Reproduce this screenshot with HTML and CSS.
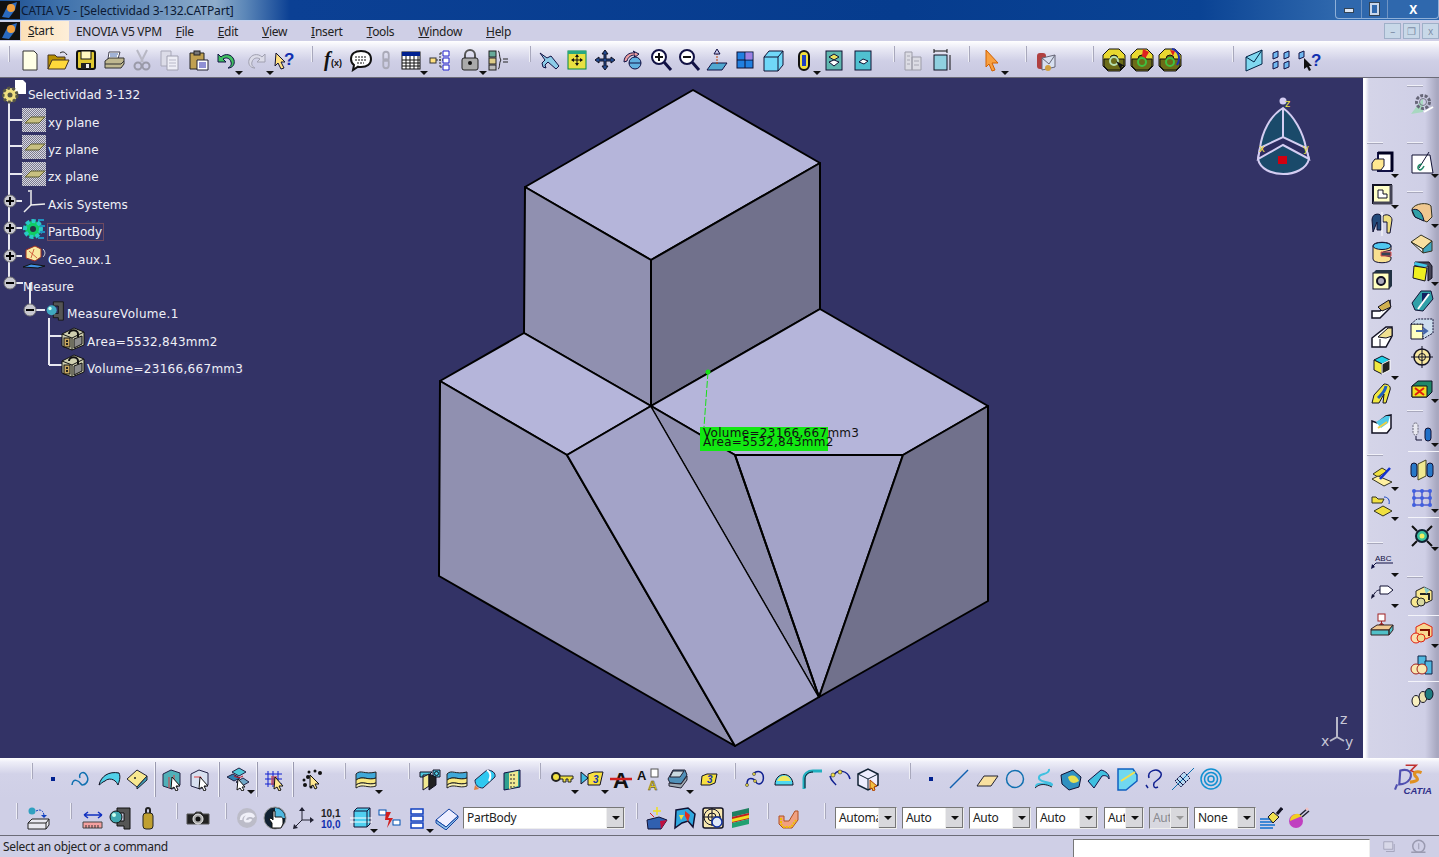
FILE: index.html
```html
<!DOCTYPE html>
<html lang="en">
<head>
  <meta charset="UTF-8">
  <title>CATIA V5 - [Selectividad 3-132.CATPart]</title>
  <link rel="stylesheet" href="styles.css">
</head>
<body>
  <svg class="defs" width="0" height="0">
    <defs>
      <pattern id="dither" width="2" height="2" patternUnits="userSpaceOnUse"><rect width="2" height="2" fill="#7a7a90"/><rect width="1" height="1" fill="#d8d8e0"/><rect x="1" y="1" width="1" height="1" fill="#d8d8e0"/></pattern>
      <symbol id="plane" viewBox="0 0 24 24"><rect width="24" height="24" fill="url(#dither)"/><path d="M3 15l6-6h14l-6 6z" fill="#c8c080" stroke="#5a5a30"/></symbol>
      <symbol id="box" viewBox="0 0 24 24"><path d="M1 7l12-6 10 4v13l-12 5-10-4z" fill="#cfcfb0" stroke="#111"/><path d="M1 7l10 4v12M11 11l12-6" fill="none" stroke="#111"/><rect x="3" y="11" width="6" height="9" fill="#c8a860" stroke="#111"/><path d="M5 13h2v2H5zM5 16h2v2H5z" fill="#222"/><path d="M13 12l8-3v8l-8 4z" fill="#8c8c8c" stroke="#111"/><path d="M8 7c0-5 9-5 9 0v3" fill="none" stroke="#111" stroke-width="2"/></symbol>
      <symbol id="locked" viewBox="0 0 24 24"><path d="M1 7l6-6h10l6 6v11l-5 5H6l-5-5z" fill="#e8d830" stroke="#111"/><path d="M2 11l6 0a4 4 0 0 1 8 0h6v7l-4 4H6l-4-4z" fill="#6c6c18" stroke="#111"/></symbol>
    </defs>
  </svg>

  <div class="titlebar">
    <svg class="applogo" viewBox="0 0 20 18"><rect width="20" height="18" fill="#111"/><path d="M2 16L8 4l9-3-2 8-6 8z" fill="#2a6ac0"/><circle cx="11" cy="7" r="4" fill="#f0a040"/></svg>
    <span class="title-text">CATIA V5 - [Selectividad 3-132.CATPart]</span>
    <div class="win-btns">
      <div class="win-btn btn-min"><i></i></div>
      <div class="win-btn btn-max"><i></i></div>
      <div class="win-btn btn-close">X</div>
    </div>
  </div>

  <div class="menubar">
    <svg class="applogo" viewBox="0 0 20 18"><rect width="20" height="18" fill="#111"/><path d="M2 16L8 4l9-3-2 8-6 8z" fill="#2a6ac0"/><circle cx="11" cy="7" r="4" fill="#f0a040"/></svg>
    <span class="menu-start"><u>S</u>tart</span>
    <span class="menu-item menu-enovia">ENOVIA V5 VPM</span>
    <span class="menu-item"><u>F</u>ile</span>
    <span class="menu-item"><u>E</u>dit</span>
    <span class="menu-item"><u>V</u>iew</span>
    <span class="menu-item"><u>I</u>nsert</span>
    <span class="menu-item"><u>T</u>ools</span>
    <span class="menu-item"><u>W</u>indow</span>
    <span class="menu-item"><u>H</u>elp</span>
    <div class="mdi-btns">
      <div class="mdi-btn">&#8211;</div>
      <div class="mdi-btn">&#10064;</div>
      <div class="mdi-btn">x</div>
    </div>
  </div>

  <div class="toolbar toolbar-top">
    <i class="grip"></i>
    <span class="tool ml-6"><svg viewBox="0 0 24 24"><path d="M5 3h11l3 3v16H5z" fill="#ffffe6" stroke="#333"/></svg></span>
    <span class="tool"><svg viewBox="0 0 24 24"><path d="M2 7h7l2 2h8v4H7l-5 8z" fill="#b89000" stroke="#432"/><path d="M2 21l4-9h17l-4 9z" fill="#ffd83a" stroke="#432"/><path d="M14 5c3-2 5-1 7 2" fill="none" stroke="#222"/></svg></span>
    <span class="tool"><svg viewBox="0 0 24 24"><rect x="3" y="3" width="18" height="18" rx="2" fill="#e0c830" stroke="#111" stroke-width="2"/><rect x="7" y="3" width="10" height="8" fill="#fff7c0" stroke="#111"/><rect x="7" y="15" width="10" height="6" fill="#222"/><rect x="12" y="16" width="3" height="4" fill="#eee"/></svg></span>
    <span class="tool"><svg viewBox="0 0 24 24"><path d="M7 4h11l-2 7H6z" fill="#fff" stroke="#445"/><path d="M8 6h8M8 8h7" stroke="#46a"/><path d="M3 13l4-3h15v6l-3 4H3z" fill="#c0b890" stroke="#333"/><path d="M3 16h16l3-3" fill="none" stroke="#333"/></svg></span>
    <span class="tool"><svg viewBox="0 0 24 24"><path d="M7 2l6 12M17 2L11 14" stroke="#b8b8c4" stroke-width="2"/><circle cx="8" cy="18" r="3.500" fill="none" stroke="#9a9aa8" stroke-width="2"/><circle cx="16" cy="18" r="3.500" fill="none" stroke="#9a9aa8" stroke-width="2"/></svg></span>
    <span class="tool"><svg viewBox="0 0 24 24"><path d="M3 3h10v15H3z" fill="#dcdce8" stroke="#a8a8b8"/><path d="M9 8h11v14H9z" fill="#eeeef6" stroke="#a0a0b0"/><path d="M11 12h7M11 15h7M11 18h7" stroke="#b8b8c8"/></svg></span>
    <span class="tool"><svg viewBox="0 0 24 24"><path d="M4 5h14v16H4z" fill="#c0a050" stroke="#222"/><rect x="8" y="3" width="6" height="4" fill="#777" stroke="#222"/><path d="M11 12h11v10H11z" fill="#fff" stroke="#223"/><path d="M13 15h7M13 17h7M13 19h7" stroke="#22a"/></svg></span>
    <span class="tool drop"><svg viewBox="0 0 24 24"><path d="M4 6v8h8l-3-3c3-2 7-1 8 3 1 3-1 5-3 6 5 0 7-4 6-8-2-6-9-7-13-3z" fill="#40c060" stroke="#114"/></svg></span>
    <span class="tool drop ml-3"><svg viewBox="0 0 24 24"><path d="M20 6v8h-8l3-3c-3-2-7-1-8 3-1 3 1 5 3 6-5 0-7-4-6-8 2-6 9-7 13-3z" fill="#dcdce8" stroke="#a0a0b0"/></svg></span>
    <span class="tool"><svg viewBox="0 0 24 24"><path d="M3 5l9 9-4 0 3 6-3 1-3-6-3 3z" fill="#ffe080" stroke="#113"/><text x="11" y="17" class="icon-q">?</text></svg></span>
    <i class="grip ml-12"></i>
    <span class="tool ml-6"><svg viewBox="0 0 24 24"><text x="3" y="18" class="icon-fx">f</text><text x="10" y="18" class="icon-fx2">(x)</text></svg></span>
    <span class="tool"><svg viewBox="0 0 24 24"><path d="M12 3c6 0 10 3 10 8s-4 8-10 8c-1 0-2 0-3-.3L4 22l1-5c-2-1.500-3-3.500-3-6 0-5 4-8 10-8z" fill="#fff" stroke="#111" stroke-width="2"/><path d="M6 9h12M6 12h12M8 15h7" stroke="#111" stroke-dasharray="2 1"/></svg></span>
    <span class="tool thin"><svg viewBox="0 0 24 24"><rect x="9" y="3" width="6" height="10" rx="3" fill="none" stroke="#aaaab8" stroke-width="2"/><rect x="9" y="11" width="6" height="10" rx="3" fill="none" stroke="#aaaab8" stroke-width="2"/></svg></span>
    <span class="tool drop"><svg viewBox="0 0 24 24"><rect x="3" y="4" width="18" height="17" fill="#fff" stroke="#111"/><rect x="3" y="4" width="18" height="4" fill="#002090"/><path d="M3 12h18M3 15h18M3 18h18M7 8v13M11 8v13M15 8v13M19 8v13" stroke="#111"/></svg></span>
    <span class="tool ml-1"><svg viewBox="0 0 24 24"><rect x="2" y="10" width="6" height="5" fill="#ffe080" stroke="#333"/><path d="M15 3h6v5h-6zM15 10h6v5h-6zM15 17h6v5h-6z" fill="#fff" stroke="#22c"/><path d="M8 12h7M12 5v14M12 5h3M12 19h3" stroke="#333" stroke-dasharray="2 1"/></svg></span>
    <span class="tool drop ml-2"><svg viewBox="0 0 24 24"><path d="M7 11V7a5 5 0 0 1 10 0v4" fill="none" stroke="#555" stroke-width="2"/><rect x="4" y="10" width="16" height="12" rx="2" fill="#aaa" stroke="#222"/><circle cx="12" cy="15" r="2" fill="#111"/></svg></span>
    <span class="tool"><svg viewBox="0 0 24 24"><rect x="3" y="3" width="7" height="6" fill="#6a9" stroke="#222"/><rect x="3" y="10" width="7" height="6" fill="#dc8" stroke="#222"/><rect x="3" y="17" width="7" height="5" fill="#bbb" stroke="#222"/><path d="M12 3c2 0 1 7 3 9-2 2-1 9-3 9" fill="none" stroke="#222"/><path d="M17 11h5M17 14h5" stroke="#222"/></svg></span>
    <i class="grip ml-17"></i>
    <span class="tool ml-4"><svg viewBox="0 0 24 24"><path d="M3 5l7 5 4-2 8 10-3 3-8-7-3 3 1 3-3-1-1-4 3-3z" fill="#8ccce8" stroke="#114"/></svg></span>
    <span class="tool"><svg viewBox="0 0 24 24"><rect x="3" y="3" width="18" height="18" fill="#e8e040" stroke="#084"/><rect x="3" y="3" width="18" height="3" fill="#28a880"/><path d="M12 7v10M7 12h10" stroke="#111"/><path d="M12 6l-2 3h4zM12 18l-2-3h4zM6 12l3-2v4zM18 12l-3-2v4z" fill="#111"/></svg></span>
    <span class="tool"><svg viewBox="0 0 24 24"><path d="M12 2l3 4h-2v5h5V9l4 3-4 3v-2h-5v5h2l-3 4-3-4h2v-5H6v2l-4-3 4-3v2h5V6H9z" fill="#224a90" stroke="#112"/></svg></span>
    <span class="tool"><svg viewBox="0 0 24 24"><path d="M3 14c0-6 5-10 11-9l-2-2 6 3-5 4 1-3c-4 0-7 2-8 6z" fill="#f0a0a0" stroke="#114"/><circle cx="14" cy="15" r="6" fill="#60b0e0" stroke="#114"/><path d="M8 15h12" stroke="#114"/></svg></span>
    <span class="tool"><svg viewBox="0 0 24 24"><circle cx="10" cy="9" r="7" fill="#fff" stroke="#114" stroke-width="2"/><path d="M10 5v8M6 9h8" stroke="#111" stroke-width="2"/><path d="M15 14l7 8" stroke="#114" stroke-width="3"/></svg></span>
    <span class="tool"><svg viewBox="0 0 24 24"><circle cx="10" cy="9" r="7" fill="#fff" stroke="#114" stroke-width="2"/><path d="M6 9h8" stroke="#111" stroke-width="2"/><path d="M15 14l7 8" stroke="#114" stroke-width="3"/></svg></span>
    <span class="tool"><svg viewBox="0 0 24 24"><path d="M2 22l5-7h15l-5 7z" fill="#50a8d0" stroke="#114"/><path d="M12 16V4" stroke="#c04000" stroke-dasharray="2 1"/><path d="M12 1l-3 5h6z" fill="#c8c8e8" stroke="#114"/></svg></span>
    <span class="tool"><svg viewBox="0 0 24 24"><rect x="4" y="4" width="16" height="16" fill="#2080e0" stroke="#113"/><path d="M12 4v16M4 12h16" stroke="#113"/><rect x="12.500" y="4.500" width="7" height="7" fill="#a080e0"/></svg></span>
    <span class="tool"><svg viewBox="0 0 24 24"><path d="M3 9l5-6h14v14l-5 6H3z" fill="#70d8f8" stroke="#113"/><path d="M3 9h14v14M17 9l5-6" fill="none" stroke="#113"/></svg></span>
    <span class="tool drop ml-3"><svg viewBox="0 0 24 24"><rect x="7" y="3" width="10" height="19" rx="5" fill="#f0e040" stroke="#111" stroke-width="2"/><rect x="10" y="7" width="4" height="11" fill="#2040c0"/></svg></span>
    <span class="tool ml-2"><svg viewBox="0 0 24 24"><rect x="4" y="3" width="16" height="19" fill="#60b8b0" stroke="#113"/><path d="M7 9l5-3 5 3-5 3z" fill="#e8e060" stroke="#113"/><path d="M7 14l5-2 5 2-5 4z" fill="#fff" stroke="#113"/></svg></span>
    <span class="tool ml-1"><svg viewBox="0 0 24 24"><rect x="4" y="3" width="16" height="19" fill="#50c0d0" stroke="#113"/><path d="M8 14l4-3 5 2-4 3z" fill="#fff" stroke="#113"/></svg></span>
    <i class="grip ml-16"></i>
    <span class="tool ml-4"><svg viewBox="0 0 24 24"><path d="M4 4h7v18H4zM11 9h9v13h-9z" fill="#dcdce4" stroke="#9c9ca8"/><path d="M6 8h3M6 12h3M6 16h3M13 13h5M13 17h5" stroke="#a8a8b4"/></svg></span>
    <span class="tool"><svg viewBox="0 0 24 24"><rect x="5" y="7" width="13" height="15" fill="#90d0e0" stroke="#112"/><path d="M5 3h13M5 1v4M18 1v4" stroke="#111"/><path d="M21 7v15" stroke="#111"/></svg></span>
    <i class="grip ml-13"></i>
    <span class="tool drop ml-8"><svg viewBox="0 0 24 24"><path d="M6 2l12 13-6 0 3 7-3 1-3-7-3 3z" fill="#f8a040" stroke="#d06000"/></svg></span>
    <i class="grip ml-19"></i>
    <span class="tool ml-5"><svg viewBox="0 0 24 24"><rect x="3" y="5" width="9" height="16" rx="3" fill="#b04040"/><path d="M8 10l13-3v12l-13 3z" fill="#d8e0f0" stroke="#667"/><path d="M8 10l7 6 6-9" fill="none" stroke="#667"/><circle cx="14" cy="20" r="3" fill="#d0a040"/></svg></span>
    <i class="grip ml-32"></i>
    <span class="tool ml-6"><svg viewBox="0 0 24 24"><use href="#locked"/><circle cx="12" cy="13" r="4" fill="none" stroke="#b8e0b0" stroke-width="2"/><path d="M14 13l5 9 1-4 3 0z" fill="#111"/></svg></span>
    <span class="tool"><svg viewBox="0 0 24 24"><use href="#locked"/><path d="M13 1l6 3-4 7-3-3z" fill="#e02020"/><circle cx="12" cy="14" r="4" fill="none" stroke="#40c040" stroke-width="2"/></svg></span>
    <span class="tool"><svg viewBox="0 0 24 24"><use href="#locked"/><path d="M14 1c7 2 9 9 5 16" fill="none" stroke="#2030b0" stroke-width="2"/><path d="M12 2l5 1-2 5z" fill="#e02020"/><circle cx="12" cy="14" r="4" fill="none" stroke="#40c040" stroke-width="2"/></svg></span>
    <i class="grip ml-48"></i>
    <span class="tool ml-6"><svg viewBox="0 0 24 24"><path d="M4 9l16-7v14L4 23z" fill="#80d8f0" stroke="#024"/><path d="M4 9l8 5 8-12" fill="none" stroke="#024"/></svg></span>
    <span class="tool"><svg viewBox="0 0 24 24"><g fill="#70b8f0" stroke="#114"><path d="M3 5l5-2v6l-5 2zM14 5l5-2v6l-5 2zM3 15l5-2v6l-5 2zM14 15l5-2v6l-5 2z"/></g></svg></span>
    <span class="tool"><svg viewBox="0 0 24 24"><path d="M1 5l5-2v6l-5 2z" fill="#70b8f0" stroke="#114"/><path d="M6 10l8 8-3 0 2 4-2 1-2-4-3 2z" fill="#111"/><text x="13" y="18" class="icon-q">?</text></svg></span>
  </div>

  <div class="workspace">
    <div class="viewport">
      <svg class="model" viewBox="0 78 1363 680">
        <g stroke="#000" stroke-width="2" stroke-linejoin="round">
          <path d="M525 187L693 90l127 73-169 97z" fill="#b5b5da"/>
          <path d="M525 187l126 73v146l-127-73z" fill="#9090b0"/>
          <path d="M651 260l169-97v146l-169 97z" fill="#71718c"/>
          <path d="M440 381l84-48 127 73-84 49z" fill="#b5b5da"/>
          <path d="M651 406l169-97 168 97-85 49H735z" fill="#b5b5da"/>
          <path d="M440 381l127 74 168 291-296-170z" fill="#9090b0"/>
          <path d="M567 455l84-49 168 291-84 49z" fill="#a3a3c8"/>
          <path d="M651 406l84 49 84 242z" fill="#9090b0" stroke="none"/>
          <path d="M735 455h168l-84 242z" fill="#a3a3c8"/>
          <path d="M903 455l85-49v195l-169 96z" fill="#71718c"/>
          <path d="M651 406l84 49 84 242" fill="none"/>
        </g>
        <path d="M651 406l168 291" stroke="#000" fill="none"/>
        <path d="M708 372l-4 55" stroke="#18e018" stroke-dasharray="7 2" fill="none"/>
        <circle cx="708" cy="372" r="2.500" fill="#18e018"/>
        <rect x="700" y="427" width="128" height="24" fill="#12e812"/>
      </svg>
      <span class="label label-vol">Volume=23166,667mm3</span>
      <span class="label label-area">Area=5532,843mm2</span>

      <div class="tree">
        <svg class="tree-lines" viewBox="0 0 120 300">
          <g stroke="#e8e8f0" stroke-width="2" fill="none">
            <path d="M9 22v183M9 42h13M9 68h13M9 96h13M9 123h13M9 150h13M9 178h13M9 205h14M30 205v27M36 232h9M49 240v47M49 258h13M49 287h13"/>
          </g>
          <g fill="#c8c8d0" stroke="#777">
            <circle cx="10" cy="123" r="6"/><circle cx="10" cy="150" r="6"/><circle cx="10" cy="178" r="6"/><circle cx="10" cy="205" r="6"/><circle cx="30" cy="232" r="6"/>
          </g>
          <path d="M6 123h8M10 119v8M6 150h8M10 146v8M6 178h8M10 174v8M6 205h8M26 232h8" stroke="#000" stroke-width="2"/>
        </svg>
        <div class="tree-row lvl-0"><svg class="node-icon" viewBox="0 0 24 24"><path d="M13 0h8l3 3v11H13z" fill="#fff"/><circle cx="8" cy="15" r="7" fill="#f0e080" stroke="#554" stroke-width="3" stroke-dasharray="3 2"/><circle cx="8" cy="15" r="2.500" fill="#554"/></svg><span>Selectividad 3-132</span></div>
        <div class="tree-row lvl-1"><svg class="node-icon"><use href="#plane"/></svg><span>xy plane</span></div>
        <div class="tree-row lvl-1"><svg class="node-icon"><use href="#plane"/></svg><span>yz plane</span></div>
        <div class="tree-row lvl-1"><svg class="node-icon"><use href="#plane"/></svg><span>zx plane</span></div>
        <div class="tree-row lvl-1"><svg class="node-icon" viewBox="0 0 24 24"><path d="M9 2v13L2 22M9 15l14-1M6 1h4" fill="none" stroke="#eee" stroke-width="1.500"/></svg><span>Axis Systems</span></div>
        <div class="tree-row lvl-1"><svg class="node-icon" viewBox="0 0 24 24"><circle cx="11" cy="12" r="8" fill="#1c6" stroke="#2ac8c8" stroke-width="4" stroke-dasharray="4 2"/><circle cx="11" cy="12" r="3" fill="#234"/><path d="M16 3h6M18 9h5M18 15h5M16 21h6" stroke="#2090c0" stroke-width="2"/></svg><span class="outlined">PartBody</span></div>
        <div class="tree-row lvl-1"><svg class="node-icon" viewBox="0 0 24 24"><path d="M4 5l9-4 6 3v8l-6 4-9-3z" fill="#f8e8a0" stroke="#a03020"/><path d="M7 6l8 7M12 4l-3 9" stroke="#d06040"/><path d="M1 22l8-3 14 2-7 2z" fill="#4090e0" stroke="#111"/><path d="M21 4c3 3 2 6 0 8" fill="none" stroke="#ddd"/></svg><span>Geo_aux.1</span></div>
        <div class="tree-row lvl-1 no-icon"><span>Measure</span></div>
        <div class="tree-row lvl-2"><svg class="node-icon node-small" viewBox="0 0 24 24"><path d="M10 1h12v22h-6v-3h-6v-5h6V6h-6z" fill="#555" stroke="#111"/><circle cx="8" cy="11" r="6" fill="#40a8c0"/><circle cx="6" cy="9" r="2" fill="#cfe"/></svg><span class="value-text">MeasureVolume.1</span></div>
        <div class="tree-row lvl-3"><svg class="node-icon"><use href="#box"/></svg><span class="value-text">Area=5532,843mm2</span></div>
        <div class="tree-row lvl-3"><svg class="node-icon"><use href="#box"/></svg><span class="value-text outlined-dim">Volume=23166,667mm3</span></div>
      </div>

      <svg class="compass" viewBox="0 0 56 84">
        <path d="M27 14C14 22 6 38 4 54L2 65c4 20 46 20 51 0L50 54C47 38 38 22 27 14z" fill="#1a4a6a" stroke="#d4cdf2" stroke-width="2"/>
        <path d="M4 54l23-11 23 11 3 11-26-14L2 65z" fill="#2c2c60" stroke="#d4cdf2" stroke-width="2"/>
        <path d="M27 14v29" fill="none" stroke="#d4cdf2" stroke-width="2"/>
        <circle cx="27" cy="7" r="3.500" fill="#d4cdf2"/>
        <rect x="22" y="62" width="9" height="8" fill="#d00010"/>
        <text x="29" y="13" class="axis-mini">z</text><text x="3" y="58" class="axis-mini">x</text><text x="47" y="58" class="axis-mini">y</text>
      </svg>
      <svg class="triad" viewBox="0 0 40 44">
        <path d="M17 7v20L10 31M17 27l7 4" fill="none" stroke="#b8b8c8" stroke-width="2"/>
        <text x="20" y="14" class="axis-big">z</text><text x="1" y="36" class="axis-big">x</text><text x="25" y="37" class="axis-big">y</text>
      </svg>
    </div>

    <div class="sidebar">
      <div class="side-col">
        <i class="hgrip mt-64"></i>
        <span class="tool drop mt-5"><svg viewBox="0 0 24 24"><path d="M8 2h14v18H8z" fill="#fff" stroke="#114" stroke-width="2"/><path d="M8 2l14 0v18" fill="none" stroke="#002" stroke-width="3"/><path d="M2 12l3-4h9v7l-3 4H2z" fill="#ffe890" stroke="#113"/></svg></span>
        <span class="tool drop mt-3"><svg viewBox="0 0 24 24"><rect x="3" y="3" width="18" height="18" fill="#ffffc8" stroke="#112" stroke-width="2"/><path d="M21 3v18H3" fill="none" stroke="#445" stroke-width="3"/><path d="M8 8h5v4h4v4H8z" fill="#fff" stroke="#112"/></svg></span>
        <span class="tool mt-2"><svg viewBox="0 0 24 24"><path d="M2 8c0-7 8-7 9-4v14H7V10L3 20z" fill="#234a7a" stroke="#113"/><path d="M13 4c4-3 9 0 9 4l-2 13h-3V10h-4z" fill="#f0e080" stroke="#113"/><path d="M12 0v24" stroke="#fff"/></svg></span>
        <span class="tool"><svg viewBox="0 0 24 24"><path d="M3 6c0-5 18-5 18 0v4l-8 2v3l8 2v2c0 5-18 5-18 0z" fill="#f8e090" stroke="#113"/><ellipse cx="12" cy="6" rx="9" ry="3.500" fill="#50c8f0" stroke="#113"/><path d="M11 12h10v4H11z" fill="#345" stroke="#e05050"/></svg></span>
        <span class="tool"><svg viewBox="0 0 24 24"><rect x="3" y="5" width="16" height="16" fill="#ffffc0" stroke="#112"/><path d="M3 5l3-3h16v16l-3 3V5z" fill="#234"/><circle cx="11" cy="13" r="4" fill="#aab" stroke="#112" stroke-width="2"/></svg></span>
        <span class="tool mt-1"><svg viewBox="0 0 24 24"><path d="M2 21v-7h8l10-10v7L10 21z" fill="#fff" stroke="#112" stroke-width="1.500"/><path d="M8 10l11-7 2 7-9 4z" fill="#d0b050" stroke="#112"/></svg></span>
        <span class="tool"><svg viewBox="0 0 24 24"><path d="M2 13l14-11h6v9l-6 11H2z" fill="#fff" stroke="#112" stroke-width="1.500"/><path d="M8 12l10-9h4v8l-6 2z" fill="#f0e090" stroke="#112"/><path d="M10 14v8" stroke="#112"/></svg></span>
        <span class="tool drop"><svg viewBox="0 0 24 24"><path d="M12 3l8 4-8 4-8-4z" fill="#20d0e8" stroke="#112"/><path d="M4 7v10l8 4V11z" fill="#f0e840" stroke="#112"/><path d="M20 7v10l-8 4V11z" fill="#222" stroke="#fff"/></svg></span>
        <span class="tool"><svg viewBox="0 0 24 24"><path d="M2 22l2-8 10-11c5 0 7 3 6 6l-4 13h-3l1-9-5 9z" fill="#f0e840" stroke="#112"/><path d="M8 17c3-3 7-6 8-12" fill="none" stroke="#2060c0" stroke-width="3"/></svg></span>
        <span class="tool mt-3"><svg viewBox="0 0 24 24"><path d="M2 9l5 2 9-7 5-1v13l-4 5H2z" fill="#fff" stroke="#112" stroke-width="1.500"/><path d="M6 10l10-6 4 0-2 7-7 5z" fill="#50c8e8"/><path d="M8 16l9-6" stroke="#f0d040" stroke-width="2"/></svg></span>
        <i class="hgrip mt-16"></i>
        <span class="tool mt-6 drop"><svg viewBox="0 0 24 24"><path d="M3 10l9-6 5 3-9 6z" fill="#f0e040" stroke="#332"/><path d="M2 15l6-3 14 6-8 4z" fill="#fff0a0" stroke="#332"/><path d="M10 15l10-11" stroke="#1030d0" stroke-width="2.500"/></svg></span>
        <span class="tool drop mt-2"><svg viewBox="0 0 24 24"><path d="M2 3h4l2 2h6l-2 4H2z" fill="#f0e040" stroke="#332"/><path d="M14 3c4 0 6 3 5 7" fill="none" stroke="#1040c0"/><path d="M4 17l9-5 9 5-9 5z" fill="#f0e040" stroke="#332"/></svg></span>
        <i class="hgrip mt-22"></i>
        <span class="tool drop mt-4"><svg viewBox="0 0 24 24"><text x="5" y="11" class="icon-abc">ABC</text><path d="M6 13h17M6 13l-4 4" fill="none" stroke="#114"/><path d="M1 19l1-5 3 3z" fill="#114"/></svg></span>
        <span class="tool drop mt-3"><svg viewBox="0 0 24 24"><path d="M10 5h8l5 4-5 4h-8z" fill="#fff" stroke="#113"/><path d="M10 9c-4 0-5 3-8 7" fill="none" stroke="#113"/><path d="M1 18l1-5 3 2z" fill="#113"/></svg></span>
        <span class="tool mt-4"><svg viewBox="0 0 24 24"><rect x="8" y="1" width="7" height="7" fill="#fff" stroke="#a02020"/><path d="M11.500 8v5M7 14l4.500-4 4.500 4z" fill="#d02020" stroke="#a02020"/><path d="M1 16l6-4h16l-4 5H1z" fill="#f0c890" stroke="#322"/><path d="M1 17h18v5H1zM19 17l4-5v5l-4 5z" fill="#50c0c8" stroke="#322"/></svg></span>
      </div>
      <div class="side-col">
        <i class="hgrip mt-7"></i>
        <span class="tool mt-3"><svg viewBox="0 0 24 24"><path d="M1 22L13 6v14z" fill="#a8d8c0"/><path d="M23 15L14 20" stroke="#fff" stroke-width="2"/><circle cx="13" cy="10" r="6.500" fill="none" stroke="#667" stroke-width="3" stroke-dasharray="3 1.500"/><circle cx="13" cy="10" r="3.500" fill="none" stroke="#778"/></svg></span>
        <i class="hgrip mt-24"></i>
        <span class="tool drop mt-5"><svg viewBox="0 0 24 24"><path d="M2 4h18l3 18H2z" fill="#fff" stroke="#113"/><path d="M19 1L9 17" stroke="#113"/><path d="M12 13c-5 1-5 5-2 6 2 0 3-2 4-4" fill="none" stroke="#286" stroke-width="1.500"/></svg></span>
        <i class="hgrip mt-14"></i>
        <span class="tool drop mt-6"><svg viewBox="0 0 24 24"><path d="M2 8c3-6 16-7 19-3l1 11-5 5-12-5C3 14 2 11 2 8z" fill="#f0c890" stroke="#332"/><path d="M2 9c4-2 10 0 12 11l-9-4z" fill="#30a0a8" stroke="#113"/></svg></span>
        <span class="tool mt-2"><svg viewBox="0 0 24 24"><path d="M1 11l10-7 11 6-9 8z" fill="#f8e0a0" stroke="#332"/><path d="M1 11l12 11v-4z" fill="#eee" stroke="#332"/><path d="M22 10v10l-9 2v-4z" fill="#40a8c0" stroke="#332"/></svg></span>
        <span class="tool drop"><svg viewBox="0 0 24 24"><path d="M5 3h14l3 4v12l-4 3V7H5z" fill="#445" stroke="#112"/><path d="M5 3l13 3-3 2-11-2z" fill="#40c8e8"/><path d="M4 7l13 2-2 13-12-3z" fill="#f0f020" stroke="#112"/></svg></span>
        <span class="tool mt-2"><svg viewBox="0 0 24 24"><path d="M2 14L11 2h10l2 8-10 12-8-1z" fill="#30a0a8" stroke="#113"/><path d="M12 4h8l-8 12z" fill="#102060"/><path d="M8 20l11-15" stroke="#fff" stroke-width="2"/></svg></span>
        <span class="tool"><svg viewBox="0 0 24 24"><path d="M1 7h12v15H1z" fill="#ffffc0" stroke="#113"/><path d="M1 7l6-5h16v14l-10 6V7z" fill="#cde" stroke="#113" stroke-dasharray="2 1"/><path d="M6 14h10M13 11l4 3-4 3" fill="none" stroke="#46a" stroke-width="2"/></svg></span>
        <span class="tool"><svg viewBox="0 0 24 24"><circle cx="12" cy="12" r="8" fill="#f8e8a0" stroke="#112" stroke-width="1.500"/><circle cx="12" cy="12" r="3.500" fill="none" stroke="#112"/><path d="M12 1v22M1 12h22" stroke="#112"/></svg></span>
        <span class="tool drop mt-3"><svg viewBox="0 0 24 24"><path d="M2 10l6-5h14v11l-5 5H2z" fill="#208868" stroke="#112"/><path d="M2 10h15v11H2z" fill="#f0e020" stroke="#112"/><path d="M5 12l9 7M14 12l-9 7" stroke="#e02010" stroke-width="2"/></svg></span>
        <i class="hgrip mt-8"></i>
        <span class="tool drop mt-6"><svg viewBox="0 0 24 24"><rect x="3" y="3" width="5" height="12" rx="2.500" fill="#e8e8f0" stroke="#667" stroke-dasharray="2 1"/><path d="M6 16v4h6" fill="none" stroke="#113"/><rect x="15" y="8" width="6" height="13" rx="3" fill="#2070c8" stroke="#113"/></svg></span>
        <i class="sep-line mt-5"></i>
        <span class="tool mt-4"><svg viewBox="0 0 24 24"><rect x="1" y="5" width="6" height="14" rx="3" fill="#2878c8" stroke="#113"/><path d="M8 6l8-4v16l-8 4z" fill="#f0e890" stroke="#442"/><rect x="17" y="5" width="6" height="14" rx="3" fill="#2878c8" stroke="#113"/></svg></span>
        <span class="tool drop"><svg viewBox="0 0 24 24"><path d="M4 5h16M4 12h16M4 19h16M4 5v14M12 5v14M20 5v14" stroke="#1020c0" fill="none"/><g fill="#4060e0"><circle cx="4" cy="5" r="2"/><circle cx="12" cy="5" r="2"/><circle cx="20" cy="5" r="2"/><circle cx="4" cy="12" r="2"/><circle cx="12" cy="12" r="2"/><circle cx="20" cy="12" r="2"/><circle cx="4" cy="19" r="2"/><circle cx="12" cy="19" r="2"/><circle cx="20" cy="19" r="2"/></g></svg></span>
        <i class="sep-line mt-5"></i>
        <span class="tool drop mt-4"><svg viewBox="0 0 24 24"><circle cx="12" cy="12" r="6" fill="#38c0a0" stroke="#123" stroke-width="2"/><circle cx="12" cy="12" r="2.500" fill="#f0f060"/><path d="M2 2l5 5M22 2l-5 5M2 22l5-5M22 22l-5-5" stroke="#111" stroke-width="2"/></svg></span>
        <i class="hgrip mt-26"></i>
        <span class="tool mt-5"><svg viewBox="0 0 24 24"><path d="M6 6l8-4 8 4v9l-6 3-10-4z" fill="#f8e890" stroke="#222"/><path d="M10 9h9v6" fill="none" stroke="#222" stroke-width="2"/><circle cx="6" cy="17" r="5" fill="#f8e890" stroke="#222"/><circle cx="11" cy="17" r="4" fill="#d8d8a0" stroke="#222"/><path d="M14 2l6 3-4 4z" fill="#8cc"/></svg></span>
        <i class="sep-line mt-4"></i>
        <span class="tool drop mt-3"><svg viewBox="0 0 24 24"><path d="M6 6l8-4 8 4v9l-6 3-10-4z" fill="#f8d890" stroke="#e02010"/><path d="M10 9h9v6" fill="none" stroke="#801000" stroke-width="2"/><circle cx="6" cy="17" r="5" fill="#f8e0b0" stroke="#e02010"/><circle cx="11" cy="17" r="4" fill="#f0d890" stroke="#e02010"/></svg></span>
        <span class="tool mt-4"><svg viewBox="0 0 24 24"><path d="M8 3h8v9H8z" fill="#50b8e0" stroke="#124"/><path d="M15 8h7v13h-7z" fill="#50b8e0" stroke="#124"/><circle cx="6" cy="16" r="5" fill="#f8e8b0" stroke="#a02020"/><circle cx="12" cy="16" r="5" fill="#f8e8b0" stroke="#a02020"/></svg></span>
        <i class="sep-line mt-2"></i>
        <span class="tool mt-1"><svg viewBox="0 0 24 24"><ellipse cx="6" cy="16" rx="4" ry="5.500" fill="#f8f0c0" stroke="#112"/><ellipse cx="13" cy="12" rx="4" ry="5.500" fill="#e8e0b0" stroke="#112"/><ellipse cx="19" cy="9" rx="4" ry="5.500" fill="#1c7c80" stroke="#112"/></svg></span>
      </div>
    </div>
  </div>

  <div class="bottombar">
    <div class="toolbar bottom-row row-one">
      <i class="grip"></i>
      <span class="tool ml-6"><svg viewBox="0 0 24 24"><rect x="10" y="10" width="4" height="4" fill="#002090"/></svg></span>
      <span class="tool"><svg viewBox="0 0 24 24"><path d="M3 18c1-8 7-4 9-1s9-2 6-8-9-3-7 2" fill="none" stroke="#1070b0" stroke-width="1.500"/></svg></span>
      <span class="tool"><svg viewBox="0 0 24 24"><path d="M2 18C4 9 12 4 22 6c2 4 0 9-1 12-3-7-10-7-13-4-3 1-4 3-6 4z" fill="#50d0e8" stroke="#112"/></svg></span>
      <span class="tool"><svg viewBox="0 0 24 24"><path d="M2 12l10-9 10 6-10 11z" fill="#f8e890" stroke="#223"/><path d="M12 20l10-11 0 4-10 9z" fill="#40a0b8" stroke="#223"/><circle cx="10" cy="11" r="1" fill="#222"/></svg></span>
      <i class="divider ml-3"></i>
      <span class="tool ml-2"><svg viewBox="0 0 24 24"><path d="M3 7l8-4 9 3v12l-8 4-9-3z" fill="#50b0b8" stroke="#224"/><path d="M9 10v11M14 8v8" stroke="#e04040"/><path d="M12 10l8 9-4 0 2 4-2 1-2-4-3 2z" fill="#fff" stroke="#111"/></svg></span>
      <span class="tool"><svg viewBox="0 0 24 24"><path d="M3 7l8-4 9 3v12l-8 4-9-3z" fill="#d8e0f0" stroke="#224"/><path d="M6 10h7v10" fill="none" stroke="#e04040"/><path d="M12 10l8 9-4 0 2 4-2 1-2-4-3 2z" fill="#fff" stroke="#111"/></svg></span>
      <i class="divider ml-4"></i>
      <span class="tool drop ml-4"><svg viewBox="0 0 24 24"><path d="M6 5l7-4 7 4-7 4z" fill="#50c8d8" stroke="#224"/><path d="M1 10l6-3 7 4-6 3z" fill="#3080b0" stroke="#224"/><path d="M10 15l7-4 6 4-7 4z" fill="#70a8c8" stroke="#224"/><path d="M8 9c3 2 6 2 9 0" stroke="#c01020" fill="none"/><path d="M12 12l7 8-3 0 2 3-2 1-2-3-3 2z" fill="#fff" stroke="#111"/></svg></span>
      <i class="divider ml-4"></i>
      <span class="tool ml-3"><svg viewBox="0 0 24 24"><path d="M5 4v16M10 4v16M15 4v16M2 7h17M2 12h17M2 17h17" stroke="#1020d0"/><path d="M8 9h6v9H8z" fill="#d04040" opacity=".6"/><path d="M12 10l8 9-4 0 2 4-2 1-2-4-3 2z" fill="#ffe890" stroke="#111"/></svg></span>
      <i class="divider ml-3"></i>
      <span class="tool ml-4"><svg viewBox="0 0 24 24"><g fill="#111"><circle cx="5" cy="18" r="2"/><circle cx="8" cy="10" r="2"/><circle cx="4" cy="13" r="1.500"/><circle cx="15" cy="4" r="1.500"/><circle cx="20" cy="6" r="2"/><circle cx="9" cy="5" r="1.500"/><circle cx="11" cy="20" r="1.500"/></g><path d="M10 8l9 9-4 0 2 4-2 1-2-4-3 2z" fill="#ffe890" stroke="#111"/></svg></span>
      <i class="grip ml-18"></i>
      <span class="tool drop ml-6"><svg viewBox="0 0 24 24"><path d="M2 7c5-5 8 1 20-2v6c-8 3-13-3-20 2z" fill="#40a8d8" stroke="#222"/><path d="M2 13c7-5 12 1 20-2v5c-8 3-13-3-20 2z" fill="#f8e880" stroke="#222"/><path d="M2 18c7-5 12 1 20-2v3c-8 3-13-3-20 2z" fill="#f8f0b0" stroke="#222"/></svg></span>
      <i class="grip ml-28"></i>
      <span class="tool ml-5"><svg viewBox="0 0 24 24"><path d="M3 5h12l-3 3H6v2H3zM16 3h7v7h-7z" fill="#50c8e0" stroke="#112"/><path d="M6 10l6-3v12l-6 4z" fill="#f0e890" stroke="#112"/><path d="M12 7l7 3v8l-7 5z" fill="#222" stroke="#112"/><circle cx="19.500" cy="6.500" r="2" fill="none" stroke="#112"/></svg></span>
      <span class="tool"><svg viewBox="0 0 24 24"><path d="M2 7c5-5 8 1 20-2v6c-8 3-13-3-20 2z" fill="#40a8d8" stroke="#222"/><path d="M2 13c7-5 12 1 20-2v5c-8 3-13-3-20 2z" fill="#f8e880" stroke="#222"/><path d="M2 18c7-5 12 1 20-2v3c-8 3-13-3-20 2z" fill="#f8f0b0" stroke="#222"/></svg></span>
      <span class="tool"><svg viewBox="0 0 24 24"><path d="M2 13L14 3c5 0 9 3 8 7L10 21c-5 0-8-3-8-8z" fill="#30c8f0" stroke="#224"/><path d="M14 3c3 2 5 5 2 11" fill="none" stroke="#fff" stroke-width="2"/><path d="M2 18l4 4-5 1z" fill="#e08040"/></svg></span>
      <span class="tool"><svg viewBox="0 0 24 24"><path d="M3 6l16-3v17L3 23z" fill="#30a090" stroke="#114"/><path d="M8 6l9-2v15l-9 3z" fill="#f0e890"/><path d="M10 7v14M13 7v13" stroke="#223" stroke-dasharray="2 2"/></svg></span>
      <i class="grip ml-12"></i>
      <span class="tool drop ml-7"><svg viewBox="0 0 24 24"><circle cx="6" cy="10" r="4" fill="#f0e040" stroke="#222" stroke-width="2"/><path d="M10 9h13v3h-2v3h-3v-3h-2v3h-3v-3h-3z" fill="#f0e040" stroke="#222"/></svg></span>
      <span class="tool drop ml-2"><svg viewBox="0 0 24 24"><path d="M1 5l7 6-7 6z" fill="#40b8e0" stroke="#112"/><path d="M8 7l6-2h9l-3 13H8z" fill="#f8e040" stroke="#112"/><text x="13" y="16" class="icon-num">3</text></svg></span>
      <span class="tool ml-1"><svg viewBox="0 0 24 24"><text x="4" y="21" class="icon-a">A</text><path d="M1 12h22" stroke="#d02020" stroke-width="2.500"/></svg></span>
      <span class="tool"><svg viewBox="0 0 24 24"><text x="0" y="13" class="icon-a2">A</text><text x="11" y="23" class="icon-a3">A</text><rect x="14" y="2" width="7" height="8" fill="#fff" stroke="#555"/></svg></span>
      <span class="tool drop"><svg viewBox="0 0 24 24"><path d="M3 12l5-9h12l2 5-6 9-11-1z" fill="#5090b8" stroke="#223"/><path d="M8 4h11l-4 6H5z" fill="#c8d8e0" stroke="#223"/><path d="M4 16l12 1 6-8v4l-6 8-12-2z" fill="#a0a8b0" stroke="#223"/></svg></span>
      <span class="tool ml-4"><svg viewBox="0 0 24 24"><path d="M5 9l5-2h10l-2 9-5 2H4z" fill="#f8e040" stroke="#112"/><text x="10" y="16" class="icon-num">3</text></svg></span>
      <i class="grip ml-11"></i>
      <span class="tool ml-6"><svg viewBox="0 0 24 24"><path d="M3 17c0-8 7-6 9-2s9 2 7-7c-2-5-8-4-9-1" fill="none" stroke="#102090" stroke-width="1.500"/><g fill="#f0e040" stroke="#113" stroke-width=".5"><circle cx="3" cy="18" r="1.500"/><circle cx="11" cy="14" r="1.500"/><circle cx="10" cy="7" r="1.500"/></g></svg></span>
      <span class="tool"><svg viewBox="0 0 24 24"><path d="M3 18c0-14 18-14 18 0z" fill="#50d8f0" stroke="#112"/><path d="M5 14c3-7 12-7 14 0z" fill="#f0e860"/></svg></span>
      <span class="tool"><svg viewBox="0 0 24 24"><path d="M4 22V12c0-5 4-8 9-8h9" fill="none" stroke="#20b0c0" stroke-width="3"/><path d="M5 21V12c0-4 3-7 8-7" fill="none" stroke="#112"/></svg></span>
      <span class="tool"><svg viewBox="0 0 24 24"><path d="M6 8c3-6 14-5 16 4M2 9c1 5 4 6 6 9" fill="none" stroke="#102090" stroke-width="1.500"/><g fill="#f0e040" stroke="#112" stroke-width=".5"><circle cx="5" cy="8" r="2"/><circle cx="12" cy="5" r="2"/></g></svg></span>
      <span class="tool"><svg viewBox="0 0 24 24"><path d="M2 7l10-5 10 5v11l-10 5-10-5z" fill="#eef" stroke="#123" stroke-width="1.500"/><path d="M2 7l10 5 10-5M12 12v11" fill="none" stroke="#123"/><path d="M14 13l7 6-3 1 1 3-2 1-1-3-2 1z" fill="#f0c040" stroke="#b04000"/></svg></span>
      <i class="grip ml-27"></i>
      <span class="tool ml-6"><svg viewBox="0 0 24 24"><rect x="10" y="10" width="4" height="4" fill="#002090"/></svg></span>
      <span class="tool"><svg viewBox="0 0 24 24"><path d="M3 21L21 3" stroke="#1060b0" stroke-width="1.500"/></svg></span>
      <span class="tool"><svg viewBox="0 0 24 24"><path d="M2 19l7-10h14l-7 10z" fill="#f8e0a0" stroke="#223"/></svg></span>
      <span class="tool"><svg viewBox="0 0 24 24"><circle cx="12" cy="12" r="8.500" fill="none" stroke="#1070b0" stroke-width="1.500"/></svg></span>
      <span class="tool"><svg viewBox="0 0 24 24"><path d="M5 20c-1-6 14-2 15-2 2 0 1-1-1-2-5-1-12-2-11-6s11-2 10-8" fill="none" stroke="#40c0e0" stroke-width="2"/><path d="M4 21c5-5 11-4 17-1" fill="none" stroke="#223"/></svg></span>
      <span class="tool"><svg viewBox="0 0 24 24"><path d="M2 8l12-5 8 7-2 10-10 3-7-6z" fill="#3090c0" stroke="#113"/><path d="M9 10c5-3 9-1 11 4-5 3-9 3-11-4z" fill="#e8e050"/></svg></span>
      <span class="tool"><svg viewBox="0 0 24 24"><path d="M1 14L14 3c5 1 9 5 8 9-1-3-4-4-7-3L7 21z" fill="#40c0e0" stroke="#114"/></svg></span>
      <span class="tool"><svg viewBox="0 0 24 24"><path d="M3 2h15l4 6v6L11 23H3z" fill="#70d8f0" stroke="#1060c0" stroke-width="1.500"/><path d="M6 14L20 5" stroke="#f0e050" stroke-width="2"/></svg></span>
      <span class="tool"><svg viewBox="0 0 24 24"><path d="M6 11C4 4 14 0 18 6c2 5-5 7-7 10-1 3 0 6 4 4M3 18l2 3" fill="none" stroke="#102090" stroke-width="1.500"/></svg></span>
      <span class="tool"><svg viewBox="0 0 24 24"><path d="M4 14l9-9 6 6-9 9z" fill="#b8d8f0" stroke="#114" stroke-dasharray="2 1"/><path d="M1 23L23 1" stroke="#1070b0"/><path d="M6 12l6 6M9 9l6 6" stroke="#114"/></svg></span>
      <span class="tool"><svg viewBox="0 0 24 24"><g fill="none" stroke="#1090d0" stroke-width="1.500"><circle cx="12" cy="12" r="10"/><circle cx="12" cy="12" r="6.500"/><circle cx="12" cy="12" r="3"/></g></svg></span>
      <div class="catia-logo"><svg viewBox="0 0 40 32"><path d="M14 3h10l-5 5 4 2" fill="none" stroke="#c03030" stroke-width="1.500"/><path d="M9 8c8-2 12 2 9 8-2 3-5 5-10 5z" fill="none" stroke="#5050b0" stroke-width="2"/><path d="M29 10c-5-2-8 0-6 3 3 3 4 5-5 6" fill="none" stroke="#e09020" stroke-width="3"/><path d="M6 21l-2 5" stroke="#5050b0" stroke-width="2"/><text x="12" y="30" class="logo-text">CATIA</text></svg></div>
    </div>

    <div class="toolbar bottom-row row-two">
      <i class="grip"></i>
      <span class="tool ml-6"><svg viewBox="0 0 24 24"><circle cx="6" cy="5" r="3.500" fill="#30a0c0"/><path d="M10 5c4-2 7-1 8 4" fill="none" stroke="#1040c0" stroke-dasharray="2 1"/><path d="M15 9h6l-3 3z" fill="#1040c0"/><path d="M2 17l4-4h17v6l-3 4H2z" fill="#e8e8f0" stroke="#222"/><path d="M2 17h18v6M20 17l3-4" fill="none" stroke="#222"/></svg></span>
      <i class="grip ml-18"></i>
      <span class="tool ml-6"><svg viewBox="0 0 24 24"><path d="M3 16h19v6H3z" fill="#f4a0a0" stroke="#444"/><path d="M6 19v3M9 19v3M12 19v3M15 19v3M18 19v3" stroke="#333"/><path d="M4 9h18M4 9l4-3M4 9l4 3M22 9l-4-3M22 9l-4 3" fill="none" stroke="#1030c0" stroke-width="1.500"/></svg></span>
      <span class="tool"><svg viewBox="0 0 24 24"><path d="M9 2h13v21h-6v-3H9v-5h7V7H9z" fill="#555" stroke="#111"/><circle cx="8" cy="11" r="6" fill="#40a8b0" stroke="#111"/><circle cx="6" cy="9" r="2" fill="#cfe"/></svg></span>
      <span class="tool"><svg viewBox="0 0 24 24"><path d="M10 7V4a2 2 0 0 1 4 0v3" fill="none" stroke="#222" stroke-width="2"/><rect x="7" y="7" width="10" height="16" rx="3" fill="#c0a030" stroke="#222"/></svg></span>
      <i class="grip ml-14"></i>
      <span class="tool ml-6"><svg viewBox="0 0 24 24"><path d="M1 8h7l2-2h5l2 2h6v10H1z" fill="#222" stroke="#555"/><circle cx="12" cy="13" r="5" fill="#aaa" stroke="#eee"/><circle cx="12" cy="13" r="2.500" fill="#111"/></svg></span>
      <i class="grip ml-13"></i>
      <span class="tool ml-6"><svg viewBox="0 0 24 24"><circle cx="12" cy="12" r="10" fill="#bcbcc8"/><path d="M6 14c0-7 11-8 13-3-2-2-8-2-9 2-1 3 5 3 6 0" fill="none" stroke="#f0f0f8" stroke-width="2.500"/></svg></span>
      <span class="tool"><svg viewBox="0 0 24 24"><circle cx="12" cy="12" r="11" fill="#123" stroke="#999"/><path d="M12 2a10 10 0 0 1 10 10h-10z" fill="#50b8e0"/><path d="M9 22v-5l-3-4 2-1 2 2V5h2v6h6c1 0 2 1 2 3v4l-2 4z" fill="#fff" stroke="#111"/></svg></span>
      <span class="tool"><svg viewBox="0 0 24 24"><path d="M11 14V2M11 14l10 0M11 14l-8 8" fill="none" stroke="#223"/><path d="M11 1l-3 4h6zM23 14l-4-3v6zM2 23l1-5 4 4z" fill="#223"/></svg></span>
      <span class="tool"><svg viewBox="0 0 24 24"><text x="2" y="11" class="icon-num-sm">10,1</text><text x="2" y="22" class="icon-num-blue">10,0</text></svg></span>
      <span class="tool drop ml-2"><svg viewBox="0 0 24 24"><path d="M5 5l3-3h13v16l-3 3H5z" fill="#50d0f0" stroke="#113"/><path d="M1 12h22M1 16h22" stroke="#fff"/><path d="M5 5h13v16M18 5l3-3" fill="none" stroke="#113"/></svg></span>
      <span class="tool"><svg viewBox="0 0 24 24"><rect x="2" y="4" width="7" height="5" fill="#fff" stroke="#0050b0"/><rect x="16" y="14" width="7" height="5" fill="#fff" stroke="#0050b0"/><path d="M9 6h5l-3 6h5l-6 10 2-8H8z" fill="#d02020"/></svg></span>
      <span class="tool drop"><svg viewBox="0 0 24 24"><path d="M6 3h12v5H6zM6 10h12v5H6zM6 17h12v5H6z" fill="#fff" stroke="#1040c0" stroke-width="1.500"/></svg></span>
      <span class="tool ml-2"><svg viewBox="0 0 24 24"><path d="M1 14L14 3l9 7-12 11z" fill="#eef" stroke="#1040a0"/><path d="M1 14v3l10 7 12-12v-2L11 21z" fill="#90c0e8" stroke="#1040a0"/></svg></span>
      <div class="combo combo-part ml-2"><span class="combo-text">PartBody</span><i class="combo-arrow"></i></div>
      <i class="grip ml-11"></i>
      <span class="tool ml-5"><svg viewBox="0 0 24 24"><path d="M2 14l12-3 8 3-6 9H3z" fill="#3060b0" stroke="#113"/><path d="M15 15l7-1-6 9z" fill="#c01040"/><path d="M12 1v8M8 5h8" stroke="#f0e020" stroke-width="1.500"/><path d="M5 7l4 4" stroke="#e02020"/></svg></span>
      <span class="tool"><svg viewBox="0 0 24 24"><path d="M3 4l12-2 7 6-2 13-5-6-6 2-7 5z" fill="#30a8e0" stroke="#113" stroke-width="1.500"/><path d="M12 5l5 4-2 7-3-6z" fill="#e03020"/><path d="M6 9l5 0-3 5z" fill="#f0e040"/></svg></span>
      <span class="tool"><svg viewBox="0 0 24 24"><rect x="2" y="2" width="20" height="20" rx="2" fill="#f8e8b0" stroke="#112" stroke-width="1.500"/><g fill="none" stroke="#112"><circle cx="11" cy="11" r="8"/><circle cx="11" cy="11" r="4"/><path d="M2 11h18M11 2v18"/></g><circle cx="16" cy="16" r="5" fill="#e0e8f8" stroke="#1030a0" stroke-width="1.500"/></svg></span>
      <span class="tool"><svg viewBox="0 0 24 24"><path d="M3 6l17-4v5L3 11z" fill="#208060"/><path d="M3 11l17-4v6L3 17z" fill="#c02020"/><path d="M3 13l17-4v3L3 16z" fill="#f0e020"/><path d="M3 17l17-4v5L3 22z" fill="#20a070"/></svg></span>
      <i class="grip ml-12"></i>
      <span class="tool ml-5"><svg viewBox="0 0 24 24"><path d="M3 10h5v5h5l6-10h3v9l-6 8H7L3 18z" fill="#f0a080" stroke="#b05020"/><path d="M5 12v6l3 3h7l5-7" fill="none" stroke="#f0c000" stroke-width="2" stroke-dasharray="2 1"/></svg></span>
      <i class="grip ml-22"></i>
      <div class="combo combo-a ml-9"><span class="combo-text">Automa</span><i class="combo-arrow"></i></div>
      <div class="combo combo-b ml-5"><span class="combo-text">Auto</span><i class="combo-arrow"></i></div>
      <div class="combo combo-b ml-5"><span class="combo-text">Auto</span><i class="combo-arrow"></i></div>
      <div class="combo combo-b ml-5"><span class="combo-text">Auto</span><i class="combo-arrow"></i></div>
      <div class="combo combo-c ml-6"><span class="combo-text">Aut</span><i class="combo-arrow"></i></div>
      <div class="combo combo-c disabled ml-5"><span class="combo-text">Aut</span><i class="combo-arrow"></i></div>
      <div class="combo combo-b ml-5"><span class="combo-text">None</span><i class="combo-arrow"></i></div>
      <span class="tool ml-1"><svg viewBox="0 0 24 24"><path d="M1 13h12M1 16h14M1 19h15M1 22h13" stroke="#1070d0" stroke-width="1.500"/><path d="M9 11l5-5 6 5-6 6z" fill="#f0e050" stroke="#112"/><path d="M18 8l5-6" stroke="#112" stroke-width="3"/></svg></span>
      <span class="tool"><svg viewBox="0 0 24 24"><circle cx="9" cy="15" r="7" fill="#c040c0"/><path d="M3 15a7 7 0 0 1 12-5z" fill="#f0d020"/><path d="M13 9l7-6M15 11l7-6" stroke="#223" stroke-width="1.500"/><circle cx="20" cy="3" r="1.500" fill="#f0c0c0"/></svg></span>
    </div>

    <div class="statusbar">
      <span class="status-text">Select an object or a command</span>
      <div class="status-input"></div>
      <span class="status-btn"><svg viewBox="0 0 24 24"><path d="M5 5h12v10H5z" fill="#d8d8e8" stroke="#9a9ab0"/><path d="M19 8v10H8" fill="none" stroke="#9a9ab0"/></svg></span>
      <span class="status-btn"><svg viewBox="0 0 24 24"><circle cx="13" cy="11" r="8" fill="none" stroke="#9a9ab0" stroke-width="2"/><path d="M3 19h19" stroke="#9a9ab0" stroke-width="2"/><path d="M13 7v8" stroke="#8a8aa0"/></svg></span>
    </div>
  </div>
</body>
</html>
```

FILE: styles.css
```css
html, body {
  margin: 0;
  padding: 0;
}
body {
  width: 1439px;
  height: 857px;
  overflow: hidden;
  display: flex;
  flex-direction: column;
  background: #cfcfe6;
  font-family: "Noto Sans", Arial, sans-serif;
  font-size: 12px;
  letter-spacing: -0.3px;
  color: #222;
}
i {
  display: block;
  flex: none;
}
.defs {
  position: absolute;
}
.applogo {
  width: 20px;
  height: 18px;
  flex: none;
}

/* title and menu */
.titlebar {
  height: 20px;
  flex: none;
  display: flex;
  align-items: center;
  background: linear-gradient(to right, #1d4e90 0, #3f72ac 60px, #6c92bc 150px, #8eaccb 215px, #5c87b8 245px, #0b4094 290px, #063c8e 900px, #0a4394 1200px, #2f68ad 1336px, #2f68ad 1439px);
  border-bottom: 1px solid #c4d2ee;
}
.title-text {
  margin-left: 1px;
  color: #0c1a34;
  font-size: 12px;
  letter-spacing: -0.1px;
  white-space: nowrap;
}
.win-btns {
  margin-left: auto;
  display: flex;
  height: 18px;
  align-self: flex-start;
  border: 1px solid #8fb0d8;
  border-top: 0;
  border-radius: 0 0 4px 4px;
}
.win-btn {
  display: flex;
  align-items: center;
  justify-content: center;
  color: #fff;
  font-weight: bold;
  font-size: 12px;
}
.btn-min {
  width: 25px;
  border-right: 1px solid #6f94c4;
}
.btn-min i {
  width: 8px;
  height: 3px;
  margin-top: 3px;
  background: #dde6f4;
  border: 1px solid #345;
}
.btn-max {
  width: 25px;
  border-right: 1px solid #6f94c4;
}
.btn-max i {
  width: 5px;
  height: 8px;
  border: 2px solid #c8d6ea;
  box-shadow: 0 0 0 1px #345;
}
.btn-close {
  width: 50px;
}
.menubar {
  height: 20px;
  flex: none;
  display: flex;
  align-items: center;
  gap: 24px;
  background: #cfcfe6;
}
.applogo + .menu-start {
  margin-left: -23px;
}
.menu-start {
  margin-left: 0;
  height: 20px;
  width: 48px;
  box-sizing: border-box;
  padding-left: 7px;
  line-height: 20px;
  margin-right: -17px;
  background: linear-gradient(to right, #fce0b8, #fdeed8);
}
.menubar .applogo {
  margin-right: 0;
}
.menu-item {
  white-space: nowrap;
}
.menu-enovia {
  margin-right: -10px;
}
.mdi-btns {
  margin-left: auto;
  display: flex;
  gap: 2px;
  height: 16px;
}
.mdi-btn {
  width: 15px;
  border: 1px solid #9fb0c8;
  background: #c8d8e8;
  color: #8090a8;
  font-size: 10px;
  line-height: 14px;
  text-align: center;
}

/* toolbars */
.toolbar {
  display: flex;
  align-items: center;
  flex: none;
  box-sizing: border-box;
  background: linear-gradient(to bottom, #fff 0, #e8e8f4 8px, #cfcfe6 20px, #c8c8e0 100%);
}
.toolbar-top {
  height: 37px;
  padding: 1px 0 0 8px;
  border-bottom: 1px solid #6c6c78;
}
.grip {
  width: 1px;
  height: 16px;
  align-self: flex-start;
  margin-top: 4px;
  background: #eeeef6;
  border-right: 1px solid #a8a8bc;
}
.divider {
  width: 1px;
  height: 35px;
  align-self: flex-end;
  margin-bottom: 1px;
  background: #f4f4fa;
  border-right: 1px solid #9a9ab0;
}
.tool {
  position: relative;
  display: flex;
  flex: none;
  align-items: center;
  justify-content: center;
  width: 28px;
  height: 28px;
}
.tool svg {
  width: 24px;
  height: 24px;
}
.tool.thin {
  width: 22px;
}
.drop::after {
  content: "";
  position: absolute;
  left: 23px;
  top: 25px;
  border-left: 4px solid transparent;
  border-right: 4px solid transparent;
  border-top: 4px solid #111;
}
.ml-1 { margin-left: 1px; }
.ml-2 { margin-left: 2px; }
.ml-3 { margin-left: 3px; }
.ml-4 { margin-left: 4px; }
.ml-5 { margin-left: 5px; }
.ml-6 { margin-left: 6px; }
.ml-7 { margin-left: 7px; }
.ml-8 { margin-left: 8px; }
.ml-9 { margin-left: 9px; }
.ml-11 { margin-left: 11px; }
.ml-12 { margin-left: 12px; }
.ml-13 { margin-left: 13px; }
.ml-14 { margin-left: 14px; }
.ml-16 { margin-left: 16px; }
.ml-17 { margin-left: 17px; }
.ml-18 { margin-left: 18px; }
.ml-19 { margin-left: 19px; }
.ml-22 { margin-left: 22px; }
.ml-27 { margin-left: 27px; }
.ml-28 { margin-left: 28px; }
.ml-32 { margin-left: 32px; }
.ml-48 { margin-left: 48px; }
.mt-1 { margin-top: 1px; }
.mt-2 { margin-top: 2px; }
.mt-3 { margin-top: 3px; }
.mt-4 { margin-top: 4px; }
.mt-5 { margin-top: 5px; }
.mt-6 { margin-top: 6px; }
.mt-7 { margin-top: 7px; }
.mt-8 { margin-top: 8px; }
.mt-14 { margin-top: 14px; }
.mt-16 { margin-top: 16px; }
.mt-22 { margin-top: 22px; }
.mt-24 { margin-top: 24px; }
.mt-26 { margin-top: 26px; }
.mt-64 { margin-top: 64px; }

/* glyphs inside icons */
svg text { letter-spacing: 0; }
.icon-q { font: bold 17px "Liberation Sans", sans-serif; fill: #1030b0; }
.icon-fx { font: italic bold 20px "Liberation Serif", serif; fill: #111; }
.icon-fx2 { font: bold 9px "Liberation Sans", sans-serif; fill: #111; }
.icon-abc { font: 8px "Liberation Sans", sans-serif; fill: #114; }
.icon-num { font: italic bold 10px "Liberation Sans", sans-serif; fill: #1030b0; }
.icon-a { font: bold 22px "Liberation Sans", sans-serif; fill: #111; }
.icon-a2 { font: bold 13px "Liberation Sans", sans-serif; fill: #111; }
.icon-a3 { font: bold 13px "Liberation Sans", sans-serif; fill: #e0c820; stroke: #332; stroke-width: .4; }
.icon-num-sm { font: bold 10px "Liberation Sans", sans-serif; fill: #222; }
.icon-num-blue { font: bold 10px "Liberation Sans", sans-serif; fill: #1030b0; }
.axis-mini { font: 10px "DejaVu Sans", sans-serif; fill: #f0e040; }
.axis-big { font: 14px "DejaVu Sans", sans-serif; fill: #c8c8d8; }
.logo-text { font: italic bold 9px "Liberation Sans", sans-serif; fill: #30308a; }

/* main area */
.workspace {
  flex: 1;
  display: flex;
  min-height: 0;
}
.viewport {
  position: relative;
  width: 1363px;
  flex: none;
  overflow: hidden;
  background: #333366;
}
.model {
  position: absolute;
  left: 0;
  top: 0;
  width: 1363px;
  height: 680px;
}
.label {
  position: absolute;
  left: 703px;
  font-family: "DejaVu Sans", sans-serif;
  font-size: 12px;
  line-height: 12px;
  letter-spacing: 0.3px;
  color: #111;
  white-space: nowrap;
}
.label-vol {
  top: 349px;
}
.label-area {
  top: 358px;
}

/* tree */
.tree {
  position: absolute;
  left: 0;
  top: 3.5px;
  display: grid;
  grid-auto-rows: 27.4px;
  width: 300px;
  font-family: "DejaVu Sans", sans-serif;
  font-size: 12px;
  letter-spacing: 0;
  color: #f0f0f6;
}
.tree-lines {
  position: absolute;
  left: 0;
  top: -3.5px;
  width: 120px;
  height: 300px;
}
.tree-row {
  position: relative;
  display: flex;
  align-items: center;
  white-space: nowrap;
}
.node-icon {
  width: 24px;
  height: 24px;
  flex: none;
  margin-right: 2px;
  margin-bottom: 6px;
}
.node-small {
  width: 20px;
  margin-right: 2px;
}
.value-text {
  letter-spacing: 0.3px;
}
.lvl-0 { padding-left: 2px; }
.lvl-1 { padding-left: 22px; }
.no-icon { padding-left: 23px; }
.lvl-2 { padding-left: 45px; }
.lvl-3 { padding-left: 61px; }
.outlined {
  border: 1px solid #6e4a60;
  padding: 1px 1px 1px 0;
  margin: -2px;
  margin-left: -1px;
}
.outlined-dim {
  background: #37376c;
  border-radius: 4px;
}
.compass {
  position: absolute;
  left: 1256px;
  top: 16px;
  width: 56px;
  height: 84px;
}
.triad {
  position: absolute;
  left: 1320px;
  top: 632px;
  width: 40px;
  height: 44px;
}

/* right toolbars */
.sidebar {
  flex: 1;
  display: flex;
  gap: 12px;
  padding-left: 5px;
  box-sizing: border-box;
  overflow: hidden;
  background: linear-gradient(to right, #fff 0, #fff 2px, #d4d4e8 6px, #cfcfe6 62px, #a8a8c0 74px, #a8a8c0 100%);
}
.side-col {
  width: 28px;
  display: flex;
  flex-direction: column;
  flex: none;
}
.hgrip {
  width: 16px;
  height: 2px;
  margin-left: -1px;
  background: #f0f0f8;
  border-bottom: 1px solid #a8a8bc;
  box-sizing: border-box;
}
.sep-line {
  width: 34px;
  height: 1px;
  background: #f4f4fa;
}

/* bottom toolbars */
.bottombar {
  height: 99px;
  flex: none;
  display: flex;
  flex-direction: column;
}
.row-one {
  height: 40px;
  padding: 1px 0 0 31px;
  background: linear-gradient(to bottom, #fff 0, #eeeef8 4px, #d2d2e8 16px, #cfcfe6 100%);
}
.row-two {
  height: 38px;
  padding: 2px 0 0 16px;
  background: #cfcfe6;
  border-bottom: 1px solid #6c6c78;
}
.row-two .grip {
  margin-top: 3px;
}
.catia-logo {
  margin-left: auto;
  margin-right: 5px;
  width: 44px;
  height: 34px;
}
.catia-logo svg {
  width: 44px;
  height: 34px;
}
.combo {
  position: relative;
  display: flex;
  flex: none;
  height: 22px;
  margin-top: 1px;
  box-sizing: border-box;
  background: #fff;
  border: 1px solid;
  border-color: #777 #eee #eee #777;
  overflow: hidden;
}
.combo-text {
  flex: 1;
  min-width: 0;
  padding-left: 3px;
  overflow: hidden;
  white-space: nowrap;
  line-height: 20px;
  color: #222;
}
.combo-arrow {
  position: relative;
  width: 17px;
  background: #d8d8dc;
  border-left: 1px solid #eee;
  box-shadow: inset -1px -1px 0 #777;
}
.combo-arrow::after {
  content: "";
  position: absolute;
  left: 5px;
  top: 8px;
  border-left: 4px solid transparent;
  border-right: 4px solid transparent;
  border-top: 4px solid #111;
}
.combo-part { width: 162px; }
.combo-a { width: 62px; }
.combo-b { width: 62px; }
.combo-c { width: 40px; }
.disabled {
  background: #d8d8e0;
}
.disabled .combo-text {
  color: #8a8a90;
}
.disabled .combo-arrow::after {
  border-top-color: #999;
}

/* status line */
.statusbar {
  flex: 1;
  display: flex;
  align-items: center;
  background: #cfcfe6;
}
.status-text {
  padding-left: 3px;
  white-space: nowrap;
}
.status-input {
  margin-left: auto;
  width: 297px;
  height: 18px;
  box-sizing: border-box;
  align-self: flex-end;
  background: #fff;
  border: 1px solid #777;
  border-right-color: #eee;
  border-bottom: 0;
}
.status-btn {
  display: flex;
  justify-content: center;
  width: 29px;
  margin-left: 4px;
}
.status-btn + .status-btn {
  margin-left: 0;
  margin-right: 7px;
}
.status-btn svg {
  width: 18px;
  height: 18px;
}
```
